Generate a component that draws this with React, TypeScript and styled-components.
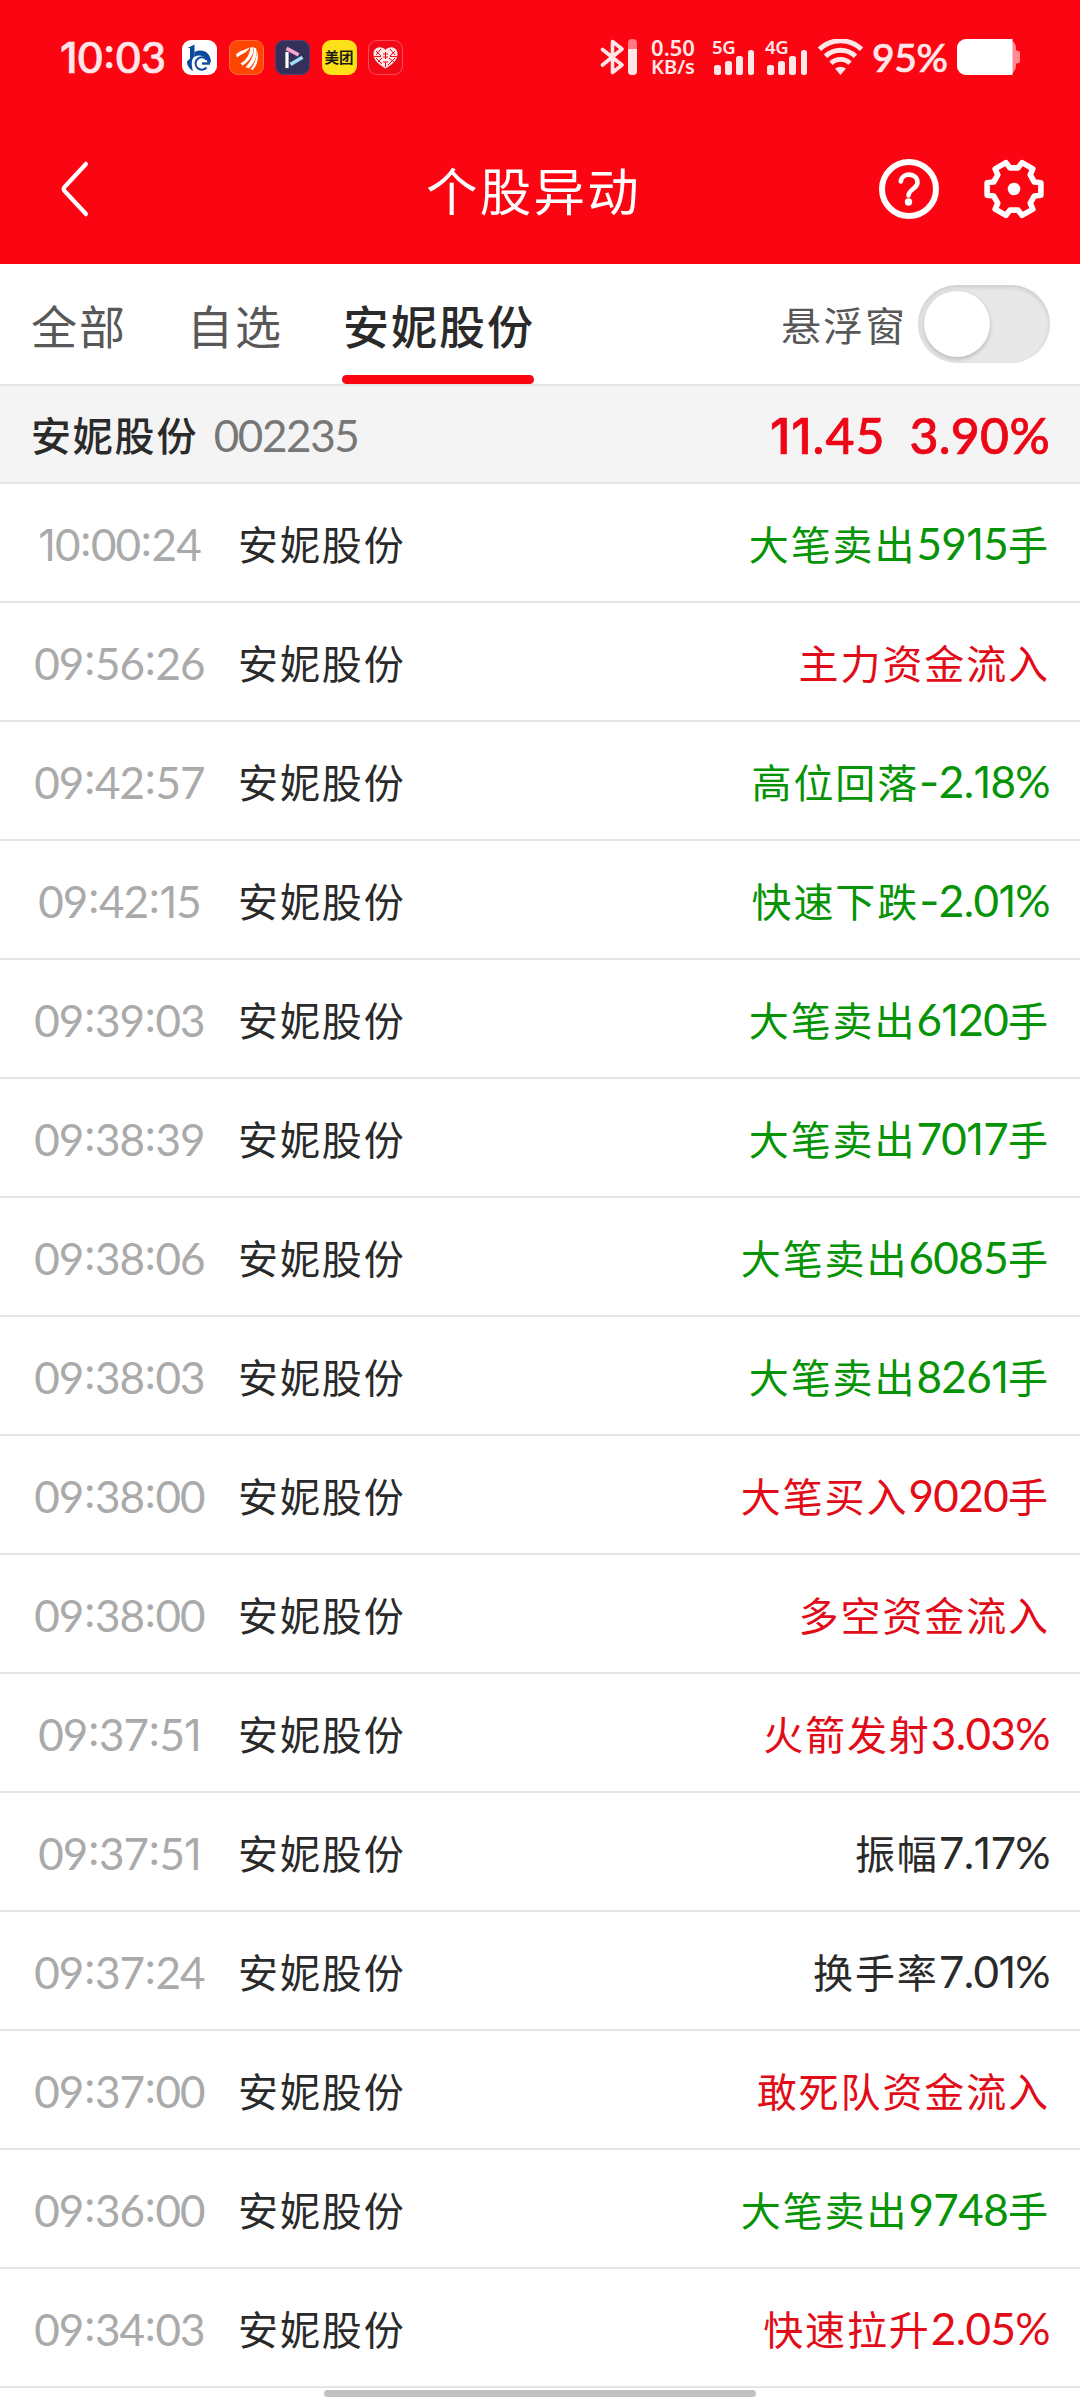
import React from "react";
import styled, { createGlobalStyle } from "styled-components";

const RED = "#fa0511";
const LINE = "#e5e5e5";
const CJK = `"Noto Sans CJK SC", sans-serif`;
const LATIN = `Lato, "Noto Sans CJK SC", sans-serif`;

const GlobalStyle = createGlobalStyle`
  * { box-sizing: border-box; }
  body { margin: 0; background: #fff; }
`;

const Screen = styled.div`
  width: 1080px;
  height: 2400px;
  display: flex;
  flex-direction: column;
  overflow: hidden;
  background: #fff;
  font-family: ${CJK};
  color: #2a2a2a;
  white-space: nowrap;
`;

/* ---------- mixed CJK / number text ---------- */

const NumRun = styled.span<{ $size: number; $tight: number }>`
  font-family: ${LATIN};
  font-size: ${(p) => p.$size}px;
  letter-spacing: ${(p) => p.$tight}px;
  line-height: 1;
`;

const One = styled.span`
  font-family: Inter, sans-serif;
  font-size: 0.98em;
  line-height: 0;
`;

const Dash = styled.span`
  font-family: Inter, sans-serif;
  line-height: 0;
`;

const Colon = styled.span`
  margin: 0 0.018em;
  vertical-align: 0.1em;
  line-height: 0;
`;

function Num({ text, size = 44, tight = -0.6 }: { text: string; size?: number; tight?: number }) {
  return (
    <NumRun $size={size} $tight={tight}>
      {text.split(/([1:-])/).map((part, i) => {
        if (part === "1") return <One key={i}>1</One>;
        if (part === ":") return <Colon key={i}>:</Colon>;
        if (part === "-") return <Dash key={i}>-</Dash>;
        return part;
      })}
    </NumRun>
  );
}

function Mixed({ text }: { text: string }) {
  return (
    <>
      {text
        .split(/([-\d.%]+)/)
        .filter(Boolean)
        .map((part, i) => (/^[-\d.%]+$/.test(part) ? <Num key={i} text={part} /> : part))}
    </>
  );
}

/* ---------- status bar ---------- */

const Top = styled.header`
  height: 264px;
  flex: none;
  background: ${RED};
  color: #fff;
`;

const StatusBar = styled.div`
  height: 114px;
  padding: 0 60px 0 60px;
  display: flex;
  align-items: center;
  color: #ffe6e8;
`;

const Clock = styled.div`
  width: 122px;
  padding-bottom: 2px;
  font-weight: 500;
  -webkit-text-stroke: 0.7px currentColor;
`;

const Apps = styled.div`
  display: flex;
  gap: 11.5px;
`;

const AppTile = styled.div<{ $bg: string; $edge?: string }>`
  width: 35px;
  height: 35px;
  border-radius: 9px;
  background: ${(p) => p.$bg};
  box-shadow: inset 0 0 0 1px ${(p) => p.$edge ?? "transparent"};
  display: flex;
  align-items: center;
  justify-content: center;
  color: #1c1a10;
  font-size: 14.5px;
  font-weight: 700;
  line-height: 1;
`;

const StatusRight = styled.div`
  margin-left: auto;
  display: flex;
  align-items: center;
  height: 36px;
`;

const Speed = styled.div`
  width: 48px;
  margin: 0 15px 0 12px;
  display: flex;
  flex-direction: column;
  align-items: center;
  font-family: "Noto Sans", sans-serif;
  font-weight: 600;
  font-size: 22px;
  line-height: 20px;
`;

const SpeedUnit = styled.span`
  font-size: 20px;
  line-height: 20px;
`;

const Signal = styled.div`
  width: 43px;
  margin-right: 10px;
  height: 36px;
  display: grid;
`;

const Network = styled.span`
  grid-area: 1 / 1;
  font-family: "Noto Sans", sans-serif;
  font-weight: 600;
  font-size: 18.5px;
  line-height: 15px;
  letter-spacing: -0.3px;
`;

const Bars = styled.div`
  grid-area: 1 / 1;
  display: flex;
  align-items: flex-end;
  gap: 4.7px;
  padding-left: 2px;
`;

const Bar = styled.span<{ $h: number }>`
  width: 6.5px;
  height: ${(p) => p.$h}px;
  border-radius: 2.5px;
  background: currentColor;
`;

const Percent = styled.div`
  width: 94px;
  padding: 0 0 0 9px;
  font-weight: 500;
  -webkit-text-stroke: 0.7px currentColor;
`;

function SignalIcon({ label }: { label: string }) {
  return (
    <Signal>
      <Network>{label}</Network>
      <Bars>
        {[10, 14, 19, 25].map((h) => (
          <Bar key={h} $h={h} />
        ))}
      </Bars>
    </Signal>
  );
}

/* ---------- title bar ---------- */

const TitleBar = styled.div`
  height: 150px;
  padding: 0 35px 0 48px;
  display: grid;
  grid-template-columns: 200px 1fr 200px;
  align-items: center;
`;

const Title = styled.h1`
  margin: 0 26px 0 0;
  font-size: 51.5px;
  font-weight: 400;
  letter-spacing: 2.2px;
  line-height: 1;
  text-align: center;
`;

const TitleActions = styled.div`
  display: flex;
  justify-content: flex-end;
  gap: 43px;
`;

/* ---------- tabs ---------- */

const TabBar = styled.nav`
  height: 122px;
  flex: none;
  padding: 0 30px 0 31px;
  border-bottom: 2px solid ${LINE};
  display: flex;
  align-items: center;
  background: #fff;
`;

const Tab = styled.div<{ $active?: boolean }>`
  height: 120px;
  margin-right: 60px;
  padding-top: 37px;
  display: flex;
  flex-direction: column;
  justify-content: space-between;
  font-size: 46px;
  letter-spacing: 2px;
  line-height: 1;
  color: ${(p) => (p.$active ? "#2a2a2a" : "#585858")};
  font-weight: ${(p) => (p.$active ? 500 : 400)};

  &::after {
    content: "";
    height: 9px;
    margin: 0 1px 0 -1px;
    border-radius: 4.5px;
    background: ${(p) => (p.$active ? RED : "transparent")};
  }
`;

const FloatLabel = styled.span`
  margin-left: auto;
  padding-bottom: 1px;
  font-size: 40px;
  letter-spacing: 2px;
  line-height: 1;
  color: #585858;
`;

const Switch = styled.div`
  width: 132px;
  height: 78px;
  margin-left: 11px;
  padding: 6px;
  border-radius: 39px;
  background: #e8e8e8;
  box-shadow: inset 0 2px 5px rgba(0, 0, 0, 0.14);
`;

const Knob = styled.div`
  width: 66px;
  height: 66px;
  border-radius: 50%;
  background: #fff;
  box-shadow: 0 2px 4px rgba(0, 0, 0, 0.22);
`;

/* ---------- stock summary ---------- */

const Summary = styled.section`
  height: 98px;
  flex: none;
  padding: 0 30px 0 31px;
  border-bottom: 2px solid ${LINE};
  background: #f4f4f4;
  display: flex;
  align-items: center;
`;

const SummaryName = styled.span`
  padding-bottom: 1px;
  font-size: 40px;
  letter-spacing: 1.8px;
  font-weight: 500;
  line-height: 1;
`;

const Code = styled.span`
  margin-left: 15.5px;
  padding-top: 2px;
  color: #777;
  line-height: 1;
`;

const Quote = styled.div`
  margin-left: auto;
  padding-top: 2px;
  display: flex;
  gap: 24px;
  color: #ec0616;
  line-height: 1;
  font-weight: 500;
  -webkit-text-stroke: 0.7px currentColor;
`;

/* ---------- event list ---------- */

const Row = styled.div`
  height: 119px;
  flex: none;
  padding: 0 30px 0 28px;
  border-bottom: 2px solid ${LINE};
  display: flex;
  align-items: center;
  line-height: 1;
  background: #fff;
`;

const Time = styled.div`
  width: 183px;
  padding-top: 2px;
  text-align: center;
  color: #aaa;
`;

const Name = styled.div`
  margin-left: 27px;
  font-size: 40px;
  letter-spacing: 1.9px;
`;

const tones = { up: "#e20c18", down: "#069306", flat: "#2a2a2a" };
type Tone = keyof typeof tones;

const Event = styled.div<{ $tone: Tone }>`
  margin-left: auto;
  font-size: 40px;
  letter-spacing: 1.9px;
  color: ${(p) => tones[p.$tone]};
`;

const HomeArea = styled.div`
  flex: 1;
  padding-top: 2px;
  display: flex;
  justify-content: center;
`;

const HomeBar = styled.div`
  width: 432px;
  height: 7px;
  border-radius: 4px;
  background: #c1c1c1;
`;

const events: { time: string; text: string; tone: Tone }[] = [
  { time: "10:00:24", text: "大笔卖出5915手", tone: "down" },
  { time: "09:56:26", text: "主力资金流入", tone: "up" },
  { time: "09:42:57", text: "高位回落-2.18%", tone: "down" },
  { time: "09:42:15", text: "快速下跌-2.01%", tone: "down" },
  { time: "09:39:03", text: "大笔卖出6120手", tone: "down" },
  { time: "09:38:39", text: "大笔卖出7017手", tone: "down" },
  { time: "09:38:06", text: "大笔卖出6085手", tone: "down" },
  { time: "09:38:03", text: "大笔卖出8261手", tone: "down" },
  { time: "09:38:00", text: "大笔买入9020手", tone: "up" },
  { time: "09:38:00", text: "多空资金流入", tone: "up" },
  { time: "09:37:51", text: "火箭发射3.03%", tone: "up" },
  { time: "09:37:51", text: "振幅7.17%", tone: "flat" },
  { time: "09:37:24", text: "换手率7.01%", tone: "flat" },
  { time: "09:37:00", text: "敢死队资金流入", tone: "up" },
  { time: "09:36:00", text: "大笔卖出9748手", tone: "down" },
  { time: "09:34:03", text: "快速拉升2.05%", tone: "up" },
];

/* Six-toothed cog outline, centred on the origin. */
const cog = Array.from({ length: 6 }, (_, i) => i * 60)
  .flatMap((a) => [
    [21.5, a - 19],
    [27.6, a - 13],
    [27.6, a + 13],
    [21.5, a + 19],
  ])
  .map(([r, a]) => {
    const t = (a * Math.PI) / 180;
    return `${(r * Math.cos(t)).toFixed(2)},${(r * Math.sin(t)).toFixed(2)}`;
  })
  .join(" ");

export default function App() {
  return (
    <Screen>
      <GlobalStyle />
      <Top>
        <StatusBar>
          <Clock>
            <Num text="10:03" size={43} tight={0.3} />
          </Clock>
          <Apps>
            <AppTile $bg="#fff">
              <svg width="35" height="35" viewBox="0 0 35 35" fill="none">
                <path d="M5.500 8 L12.500 4.500 V16.500 C9.500 19 9 24 11 31 C7.500 29 5 25.500 5 21.500 L8 18.500 V8 Z" fill="#0b4a9c" />
                <path d="M12.500 12 C21 8 29 13 29 22.500 H25.500 C24 16.500 18.500 13.500 12.500 17 Z" fill="#0b4a9c" />
                <path d="M24.500 27.500 A6.200 6.200 0 1 1 24.500 19.500" stroke="#0b4a9c" strokeWidth="2" />
                <path d="M20 23.500 H28" stroke="#0b4a9c" strokeWidth="2.400" />
              </svg>
            </AppTile>
            <AppTile $bg="#ff4600" $edge="#ff6a3c">
              <svg width="35" height="35" viewBox="0 0 35 35" fill="#fff">
                <path d="M7 14.500 C10 10.500 16 10.500 21 7 C18 13 13 13.500 8 17.500 Z" />
                <path d="M11.500 23.500 C18 20 20.500 14 21.500 7.500 L24.500 7 C24.500 15 21 21 13.500 25.500 Z" />
                <path d="M16.500 27 C22.500 21.500 24.800 14.500 25 7.500 L27.200 8.500 C28.500 16 25.500 24 19.500 28.500 Z" />
                <path d="M21.500 29 C25 25 28 19 27.800 10 C30.500 18 28 26 23.500 30 Z" />
              </svg>
            </AppTile>
            <AppTile $bg="#34305a" $edge="#57406a">
              <svg width="35" height="35" viewBox="0 0 35 35" fill="none" strokeLinecap="square">
                <path d="M12 13.500 V26.500" stroke="#fff" strokeWidth="3.200" />
                <path d="M13 9.200 L22 14" stroke="#f6a6cf" strokeWidth="3.600" />
                <path d="M17 23.500 L26 18.200" stroke="#9fdcf8" strokeWidth="3.600" />
              </svg>
            </AppTile>
            <AppTile $bg="#ffe11a">美团</AppTile>
            <AppTile $bg="#f00a18" $edge="#ff4a55">
              <svg width="35" height="35" viewBox="0 0 35 35">
                <path d="M17.500 10 C14 5.500 5.500 6.500 5.500 14 C5.500 21 12 25 17.500 28.500 C23 25 29.500 21 29.500 14 C29.500 6.500 21 5.500 17.500 10 Z" fill="#ffe8e8" />
                <path
                  d="M8 11 L13 16 M13 9 L8 15 M22 9 L27 15 M27 11 L22 16 M8 18 L14 24 M14 18 L10 22 M21 18 L26 22 M27 18 L20 25 M15 22 L20 22 M17.500 22 V27 M15 14 H20 M15 17 H20 M17.500 12 V19 M6 16.500 H13 M22 16.500 H29"
                  stroke="#f00a18"
                  strokeWidth="1"
                  fill="none"
                />
              </svg>
            </AppTile>
          </Apps>
          <StatusRight>
            <svg width="37" height="36" viewBox="0 0 37 36" fill="none">
              <path d="M2.500 10.500 L22 26 L12.500 33.500 V2.500 L22 10 L2.500 26" stroke="currentColor" strokeWidth="3.600" strokeLinejoin="round" strokeLinecap="round" />
              <rect x="28" y="0" width="9" height="36" rx="4" fill="#ff7a82" />
              <path d="M28 10 H37 V32 A4 4 0 0 1 33 36 H32 A4 4 0 0 1 28 32 Z" fill="currentColor" />
            </svg>
            <Speed>
              <span>0.50</span>
              <SpeedUnit>KB/s</SpeedUnit>
            </Speed>
            <SignalIcon label="5G" />
            <SignalIcon label="4G" />
            <svg width="45" height="36" viewBox="0 0 45 36" fill="none" stroke="currentColor" strokeWidth="4.900">
              <path d="M1.500 10.300 A30 30 0 0 1 43.500 10.300" />
              <path d="M7.500 17.300 A21.500 21.500 0 0 1 37.500 17.300" />
              <path d="M13 24.300 A13.500 13.500 0 0 1 32 24.300" />
              <path d="M17 29.500 Q22.500 26 28 29.500 L22.500 36 Z" fill="currentColor" stroke="none" />
            </svg>
            <Percent>
              <Num text="95%" size={39} tight={-0.4} />
            </Percent>
            <svg width="63" height="36" viewBox="0 0 63 36">
              <rect x="0" y="0" width="59" height="36" rx="9" fill="#ff8a92" />
              <path d="M57 11.500 H60 A3 3 0 0 1 63 14.500 V21.500 A3 3 0 0 1 60 24.500 H57 Z" fill="#ff8a92" />
              <path d="M9 0 H55.500 V36 H9 A9 9 0 0 1 0 27 V9 A9 9 0 0 1 9 0 Z" fill="#fff" />
            </svg>
          </StatusRight>
        </StatusBar>
        <TitleBar>
          <svg width="50" height="60" viewBox="0 0 50 60" fill="none">
            <path d="M41.500 5 L16.200 28.300 Q14.800 30 16.200 31.700 L41.500 55" transform="matrix(0.860 0 0 1 2.300 0)" stroke="#fff" strokeWidth="4.600" strokeLinecap="round" />
          </svg>
          <Title>个股异动</Title>
          <TitleActions>
            <svg width="62" height="62" viewBox="-31 -31 62 62" fill="none" stroke="#fff">
              <circle r="27" strokeWidth="6" />
              <path d="M-8.200 -7.500 C-7.500 -16.800 8.500 -16.800 8.500 -6.500 C8.500 -0.500 -0.500 0.500 -0.500 6.500" strokeWidth="4.600" strokeLinecap="round" />
              <circle cx="-0.500" cy="13" r="3.700" fill="#fff" stroke="none" />
            </svg>
            <svg width="62" height="62" viewBox="-31 -31 62 62" fill="none" stroke="#fff">
              <polygon points={cog} strokeWidth="5.600" strokeLinejoin="round" />
              <circle r="6.300" fill="#fff" stroke="none" />
            </svg>
          </TitleActions>
        </TitleBar>
      </Top>

      <TabBar>
        <Tab>全部</Tab>
        <Tab>自选</Tab>
        <Tab $active>安妮股份</Tab>
        <FloatLabel>悬浮窗</FloatLabel>
        <Switch>
          <Knob />
        </Switch>
      </TabBar>

      <Summary>
        <SummaryName>安妮股份</SummaryName>
        <Code>
          <Num text="002235" size={44} tight={-1.4} />
        </Code>
        <Quote>
          <Num text="11.45" size={50} tight={1} />
          <Num text="3.90%" size={50} tight={0.3} />
        </Quote>
      </Summary>

      {events.map((e, i) => (
        <Row key={i}>
          <Time>
            <Num text={e.time} tight={-1} />
          </Time>
          <Name>安妮股份</Name>
          <Event $tone={e.tone}>
            <Mixed text={e.text} />
          </Event>
        </Row>
      ))}

      <HomeArea>
        <HomeBar />
      </HomeArea>
    </Screen>
  );
}
